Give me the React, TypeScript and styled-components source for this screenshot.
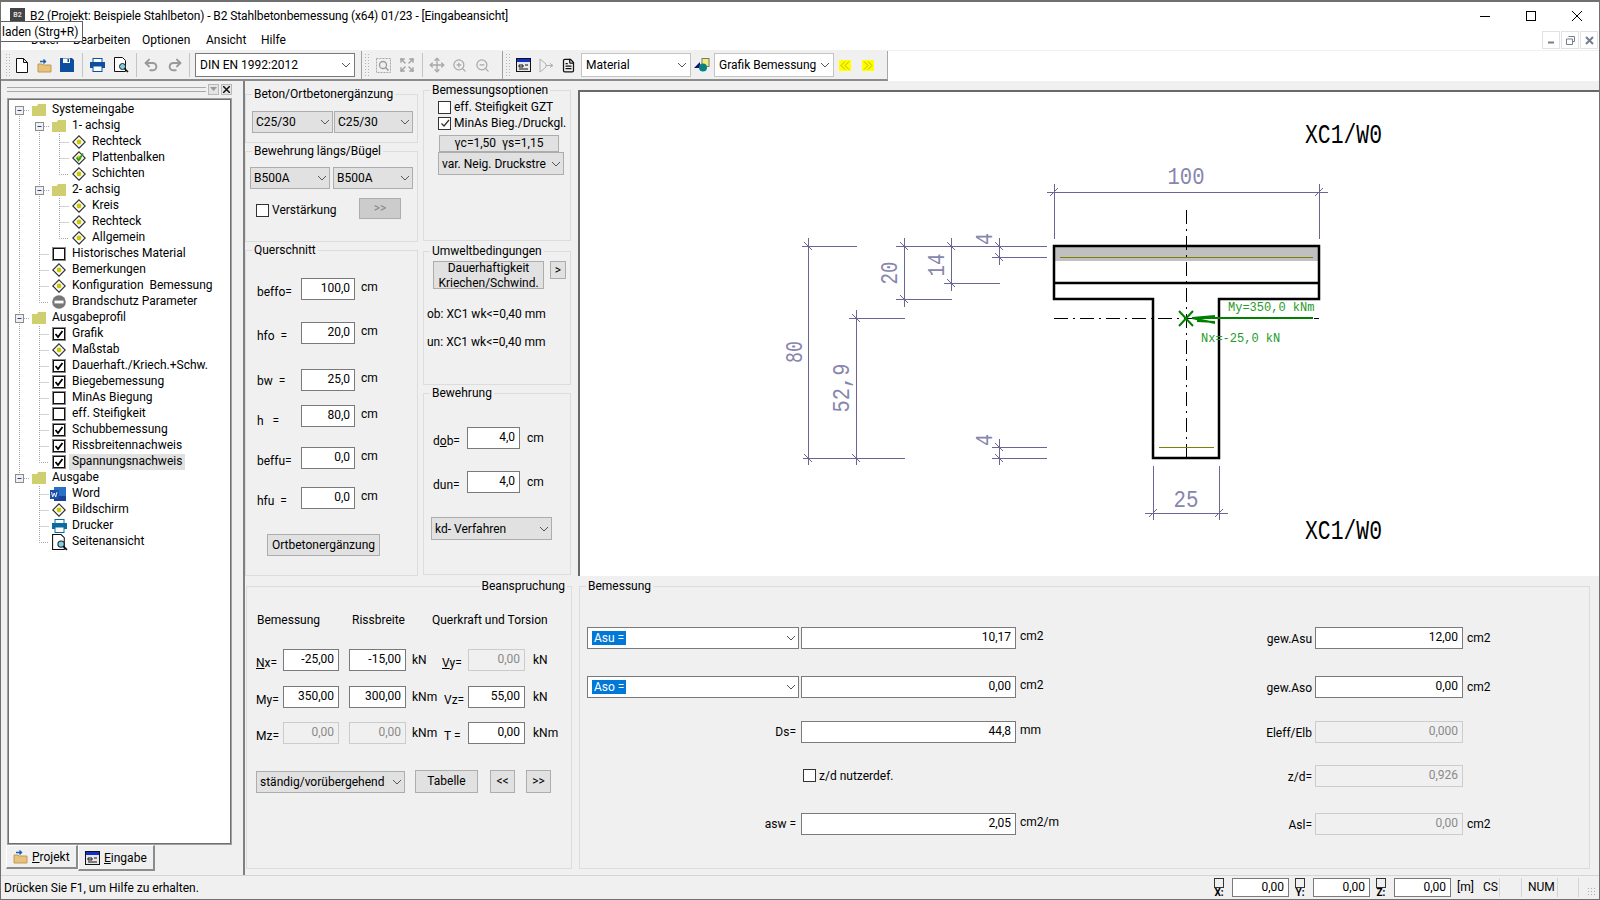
import { ReactNode } from "react";
import styled, { createGlobalStyle } from "styled-components";
import { Expand, FileText, Move, Redo2, Undo2, ZoomIn, ZoomOut } from "lucide-react";

const GlobalStyle = createGlobalStyle`
  html, body, #root {
    margin: 0;
    padding: 0;
    width: 1600px;
    height: 900px;
    overflow: hidden;
  }
  * {
    box-sizing: border-box;
  }
  body {
    font-family: Roboto, "Noto Sans", "Liberation Sans", sans-serif;
    font-size: 12px;
    color: #000;
    background: #f0f0f0;
  }
`;

const Frame = styled.div`
  position: relative;
  width: 1600px;
  height: 900px;
  display: flex;
  flex-direction: column;
  background: #f0f0f0;
  overflow: hidden;
  &::after {
    content: "";
    position: absolute;
    inset: 0;
    border: 1px solid #707070;
    border-top-width: 2px;
    pointer-events: none;
  }
`;

const TitleBar = styled.div`
  height: 30px;
  background: #fff;
  display: flex;
  align-items: center;
  padding: 1px 0 0 10px;
`;

const AppIcon = styled.span`
  width: 15px;
  height: 15px;
  background: #444;
  color: #ddd;
  font-size: 7px;
  font-weight: 700;
  line-height: 15px;
  text-align: center;
`;

const TitleText = styled.span`
  margin-left: 5px;
  flex: 1;
  letter-spacing: -0.1px;
`;

const CaptionButton = styled.span`
  width: 46px;
  display: flex;
  justify-content: center;
  align-items: center;
`;

const MenuBar = styled.div`
  height: 21px;
  background: #fff;
  border-bottom: 1px solid #f0f0f0;
  display: flex;
  align-items: center;
  padding-left: 31px;
  position: relative;
`;

const MenuItem = styled.span<{ $w: number }>`
  width: ${(p) => p.$w}px;
`;

const MdiButtons = styled.div`
  margin-left: auto;
  margin-right: 2px;
  display: flex;
  gap: 1px;
`;

const MdiButton = styled.span`
  width: 18px;
  height: 18px;
  border: 1px solid #e2e2e2;
  display: flex;
  align-items: center;
  justify-content: center;
`;

const Tooltip = styled.div`
  position: absolute;
  left: -1px;
  top: -9px;
  height: 21px;
  width: 84px;
  background: #fff;
  border: 1px solid #606060;
  padding: 1px 0 0 2px;
  line-height: 19px;
  font-size: 12px;
`;

const ToolRow = styled.div`
  height: 30px;
  background: #fff;
  display: flex;
`;

const Toolbar = styled.div`
  width: 888px;
  height: 100%;
  background: #f0f0f0;
  border-right: 1px solid #a8a8a8;
  border-bottom: 2px solid #8c8c8c;
  display: flex;
  align-items: center;
  padding-left: 5px;
`;

const Gripper = styled.span<{ $ml?: number }>`
  width: 6px;
  height: 24px;
  margin-left: ${(p) => p.$ml ?? 0}px;
  background-image: radial-gradient(#b4b4b4 0.8px, transparent 1px);
  background-size: 3px 3px;
`;

const Tool = styled.span<{ $w: number; $ml?: number }>`
  width: ${(p) => p.$w}px;
  margin-left: ${(p) => p.$ml ?? 0}px;
  height: 22px;
  display: flex;
  align-items: center;
  justify-content: center;
  flex: none;
`;

const ToolSep = styled.span<{ $ml?: number; $mr?: number }>`
  width: 1px;
  height: 24px;
  background: #c4c4c4;
  margin: 0 ${(p) => p.$mr ?? 3}px 0 ${(p) => p.$ml ?? 3}px;
  flex: none;
`;

const ToolBreak = styled.span<{ $ml: number }>`
  width: 1px;
  height: 28px;
  background: #a0a0a0;
  margin: 0 2px 0 ${(p) => p.$ml}px;
  flex: none;
`;

const Combo = styled.div<{ $w: number; $ml?: number; $dark?: boolean }>`
  width: ${(p) => p.$w}px;
  margin-left: ${(p) => p.$ml ?? 0}px;
  height: 24px;
  flex: none;
  background: #fff;
  border: 1px solid ${(p) => (p.$dark ? "#7a7a7a" : "#c4c4c4")};
  display: flex;
  align-items: center;
  justify-content: space-between;
  padding: 0 3px 0 4px;
  white-space: nowrap;
`;

const YellowButton = styled.span<{ $ml: number }>`
  width: 12px;
  height: 11px;
  background: #ffff00;
  margin-left: ${(p) => p.$ml}px;
  display: flex;
  align-items: center;
  justify-content: center;
  flex: none;
`;

const Main = styled.div`
  flex: 1;
  display: flex;
  min-height: 0;
`;

const SidePane = styled.div`
  width: 243px;
  flex: none;
  display: flex;
  flex-direction: column;
  padding: 3px 0 4px 7px;
`;

const DockHeader = styled.div`
  height: 14px;
  width: 225px;
  display: flex;
  align-items: flex-start;
  gap: 2px;
`;

const DockGrip = styled.span`
  flex: 1;
  height: 5px;
  margin-top: 3px;
  border-top: 1px solid #a8a8a8;
  border-bottom: 1px solid #a8a8a8;
`;

const DockButton = styled.span`
  width: 11px;
  height: 11px;
  background: #e4e4e4;
  border: 1px solid #b8b8b8;
  display: flex;
  align-items: center;
  justify-content: center;
`;

const TreeFrame = styled.div`
  width: 225px;
  height: 747px;
  background: #fff;
  border: 1px solid #a0a0a0;
  box-shadow: inset 0 0 0 1px #707070;
  padding: 3px 0 0 1px;
  flex: none;
`;

const TreeRow = styled.div`
  height: 16px;
  display: flex;
  align-items: center;
`;

const NodeIcon = styled.span`
  width: 14px;
  height: 14px;
  margin-left: 3px;
  flex: none;
  display: flex;
`;

const NodeLabel = styled.span<{ $selected?: boolean }>`
  margin-left: 3px;
  padding: 0 3px;
  height: 16px;
  line-height: 15px;
  white-space: pre;
  background: ${(p) => (p.$selected ? "#e0e0e0" : "transparent")};
`;

const TabRow = styled.div`
  display: flex;
  margin-left: -1px;
`;

const PaneTab = styled.div<{ $w: number; $h: number }>`
  width: ${(p) => p.$w}px;
  height: ${(p) => p.$h}px;
  display: flex;
  align-items: center;
  gap: 4px;
  padding-left: 6px;
  border-right: 2px solid #8c8c8c;
  border-bottom: 2px solid #8c8c8c;
  border-top: 1px solid #fff;
  border-left: 1px solid #fff;
`;

const Workspace = styled.div`
  flex: 1;
  border-left: 2px solid #808080;
  display: flex;
  flex-direction: column;
  min-width: 0;
`;

const TopRow = styled.div`
  height: 495px;
  display: flex;
  flex: none;
`;

const FormColumn = styled.div<{ $w: number; $ml?: number }>`
  width: ${(p) => p.$w}px;
  margin-left: ${(p) => p.$ml ?? 0}px;
  padding-top: 1px;
  flex: none;
  display: flex;
  flex-direction: column;
`;

const Group = styled.fieldset<{ $w?: number; $h: number; $ml?: number; $mt?: number }>`
  margin: ${(p) => p.$mt ?? 0}px 0 0 ${(p) => p.$ml ?? 0}px;
  padding: 0;
  width: ${(p) => (p.$w ? `${p.$w}px` : "100%")};
  height: ${(p) => p.$h}px;
  flex: none;
  border: 1px solid #dcdcdc;
  min-width: 0;
`;

const Legend = styled.legend<{ $right?: boolean }>`
  padding: 0 2px;
  margin-left: ${(p) => (p.$right ? "auto" : "6px")};
  margin-right: ${(p) => (p.$right ? "4px" : "0")};
  line-height: 16px;
  height: 16px;
  font-size: 12px;
`;

const GroupBody = styled.div<{ $pt: number; $pl: number }>`
  padding: ${(p) => p.$pt}px 0 0 ${(p) => p.$pl}px;
  display: flex;
  flex-direction: column;
  align-items: flex-start;
`;

const PickRow = styled.div<{ $gap: number; $mt?: number }>`
  display: flex;
  gap: ${(p) => p.$gap}px;
  margin-top: ${(p) => p.$mt ?? 0}px;
`;

const Select = styled.div<{ $w: number; $h?: number; $mt?: number; $ml?: number; $white?: boolean }>`
  width: ${(p) => p.$w}px;
  height: ${(p) => p.$h ?? 22}px;
  margin-top: ${(p) => p.$mt ?? 0}px;
  margin-left: ${(p) => p.$ml ?? 0}px;
  background: ${(p) => (p.$white ? "#fff" : "#e1e1e1")};
  border: 1px solid ${(p) => (p.$white ? "#7a7a7a" : "#adadad")};
  display: flex;
  align-items: center;
  justify-content: space-between;
  padding: 0 2px 0 3px;
  white-space: nowrap;
  overflow: hidden;
  flex: none;
`;

const Selected = styled.span`
  background: #0078d7;
  color: #fff;
  padding: 0 2px;
  margin-left: 1px;
`;

const Button = styled.div<{ $w: number; $h: number; $mt?: number; $ml?: number; $pt?: number; $muted?: boolean }>`
  width: ${(p) => p.$w}px;
  height: ${(p) => p.$h}px;
  margin-top: ${(p) => p.$mt ?? 0}px;
  margin-left: ${(p) => p.$ml ?? 0}px;
  padding-top: ${(p) => p.$pt ?? 0}px;
  background: ${(p) => (p.$muted ? "#cccccc" : "#e1e1e1")};
  color: ${(p) => (p.$muted ? "#858585" : "#000")};
  border: 1px solid #adadad;
  display: flex;
  align-items: center;
  justify-content: center;
  text-align: center;
  line-height: 15px;
  flex: none;
  white-space: pre;
`;

const Check = styled.span<{ $size?: number }>`
  width: ${(p) => p.$size ?? 13}px;
  height: ${(p) => p.$size ?? 13}px;
  background: #fff;
  border: 1px solid #333;
  display: flex;
  align-items: center;
  justify-content: center;
  flex: none;
`;

const CheckLine = styled.div<{ $mt?: number; $ml?: number }>`
  display: flex;
  align-items: center;
  gap: 3px;
  height: 16px;
  margin-top: ${(p) => p.$mt ?? 0}px;
  margin-left: ${(p) => p.$ml ?? 0}px;
  white-space: nowrap;
`;

const ActionRow = styled.div`
  display: flex;
  align-items: center;
  margin-top: 9px;
  width: 163px;
  justify-content: space-between;
  padding-left: 6px;
  padding-right: 12px;
`;

const FieldRow = styled.div<{ $mt?: number; $ml?: number }>`
  display: flex;
  align-items: center;
  height: 22px;
  margin-top: ${(p) => p.$mt ?? 0}px;
  margin-left: ${(p) => p.$ml ?? 0}px;
  white-space: pre;
`;

const FieldLabel = styled.span<{ $w: number; $pl?: number; $drop?: number }>`
  width: ${(p) => p.$w}px;
  padding-left: ${(p) => p.$pl ?? 0}px;
  padding-top: ${(p) => p.$drop ?? 5}px;
  flex: none;
`;

const Unit = styled.span<{ $ml: number; $w?: number; $up?: boolean }>`
  margin-left: ${(p) => p.$ml}px;
  width: ${(p) => (p.$w ? `${p.$w}px` : "auto")};
  padding-bottom: ${(p) => (p.$up ? 4 : 0)}px;
  flex: none;
`;

const NumberInput = styled.input<{ $w: number; $ml?: number; $h?: number }>`
  width: ${(p) => p.$w}px;
  height: ${(p) => p.$h ?? 22}px;
  margin: 0 0 0 ${(p) => p.$ml ?? 0}px;
  padding: 0 4px 2px 2px;
  border: 1px solid #7a7a7a;
  background: #fff;
  color: #000;
  font: inherit;
  text-align: right;
  outline: none;
  flex: none;
  &:disabled {
    background: #f0f0f0;
    border-color: #cccccc;
    color: #8a8a8a;
  }
`;

const InfoLine = styled.div<{ $mt: number; $ml: number }>`
  margin-top: ${(p) => p.$mt}px;
  margin-left: ${(p) => p.$ml}px;
  height: 16px;
  line-height: 16px;
  white-space: nowrap;
`;

const DrawingPanel = styled.div`
  margin: 9px 0 0 7px;
  flex: 1;
  background: #fff;
  border-left: 2px solid #696969;
  border-top: 2px solid #696969;
  overflow: hidden;
`;

const BottomRow = styled.div`
  flex: 1;
  display: flex;
  min-height: 0;
  padding: 2px 0 5px 1px;
`;

const HeadRow = styled.div`
  display: flex;
  height: 16px;
  line-height: 16px;
  white-space: nowrap;
  margin-left: 1px;
`;

const HeadCell = styled.span<{ $w: number }>`
  width: ${(p) => p.$w}px;
`;

const BemessRow = styled.div<{ $mt: number }>`
  display: grid;
  grid-template-columns: 212px 215px 60px 233px 148px auto;
  column-gap: 2px;
  align-items: center;
  margin-top: ${(p) => p.$mt}px;
  height: 23px;
  white-space: nowrap;
`;

const EndLabel = styled.span`
  text-align: right;
  padding-right: 3px;
`;

const SideLabel = styled.span`
  text-align: right;
  padding-right: 1px;
  padding-top: 2px;
`;

const StatusBar = styled.div`
  height: 25px;
  flex: none;
  border-top: 1px solid #d4d4d4;
  display: flex;
  align-items: center;
  padding: 0 0 1px 4px;
`;

const StatusText = styled.span`
  flex: none;
  width: 1210px;
`;

const AxisIcon = styled.span<{ $ml?: number }>`
  width: 10px;
  height: 20px;
  margin-left: ${(p) => p.$ml ?? 0}px;
  display: flex;
  flex-direction: column;
  align-items: center;
  font-size: 10px;
  font-weight: 700;
  line-height: 9px;
  flex: none;
`;

const AxisBox = styled.span`
  width: 10px;
  height: 10px;
  border: 1px solid #333;
  flex: none;
`;

const StatusCell = styled.span<{ $w: number; $divider?: boolean }>`
  width: ${(p) => p.$w}px;
  height: 19px;
  line-height: 19px;
  padding-left: 6px;
  flex: none;
  border-right: ${(p) => (p.$divider ? "1px solid #d4d4d4" : "none")};
  white-space: nowrap;
`;

const ResizeGrip = styled.span`
  width: 10px;
  height: 10px;
  margin: 8px 0 0 8px;
  background-image: radial-gradient(#b0b0b0 0.9px, transparent 1px);
  background-size: 3px 3px;
  flex: none;
`;

// small helper drawings

function Chevron() {
  return (
    <svg width="10" height="6" viewBox="0 0 10 6" style={{ flex: "none" }}>
      <path d="M1 1l4 4 4-4" fill="none" stroke="#555" strokeWidth="1" />
    </svg>
  );
}

function TickMark() {
  return (
    <svg width="10" height="10" viewBox="0 0 10 10">
      <path d="M1.5 5.5l2.5 2.5 5-6" fill="none" stroke="#333" strokeWidth="1.3" />
    </svg>
  );
}

function DoubleArrow({ back }: { back?: boolean }) {
  return (
    <svg width="10" height="9" viewBox="0 0 10 9">
      <path
        d={back ? "M5 .5l-4 4 4 4M9 .5l-4 4 4 4" : "M1 .5l4 4-4 4M5 .5l4 4-4 4"}
        fill="none"
        stroke="#b4b400"
      />
    </svg>
  );
}

type GuideKind = "v" | "t" | "l" | "blank" | "boxFirst" | "boxMid" | "boxLast";

function Guide({ kind }: { kind: GuideKind }) {
  const dots = { stroke: "#a4a4a4", strokeDasharray: "1 1", fill: "none" };
  const isBox = kind.startsWith("box");
  return (
    <svg width="20" height="16" viewBox="0 0 20 16" style={{ flex: "none" }}>
      {kind === "v" && <path d="M10.5 0v16" {...dots} />}
      {kind === "t" && <path d="M10.5 0v16M10.5 8.5h12" {...dots} />}
      {kind === "l" && <path d="M10.5 0v8.5h12" {...dots} />}
      {kind === "boxFirst" && <path d="M10.5 8v8M15 8.5h5" {...dots} />}
      {kind === "boxMid" && <path d="M10.5 0v16M15 8.5h5" {...dots} />}
      {kind === "boxLast" && <path d="M10.5 0v4M15 8.5h5" {...dots} />}
      {isBox && (
        <>
          <rect x="6.5" y="4.5" width="8" height="8" fill="#eef0f4" stroke="#8c8c8c" />
          <path d="M8.5 8.5h4" stroke="#304080" />
        </>
      )}
    </svg>
  );
}

function FolderIcon() {
  return (
    <svg width="14" height="14" viewBox="0 0 14 14">
      <path d="M0 3h5l1-2h8v12H0z" fill="#cfcf70" />
    </svg>
  );
}

function DiamondIcon({ done }: { done?: boolean }) {
  return (
    <svg width="14" height="14" viewBox="0 0 14 14">
      <path d="M7 .8L13.2 7 7 13.2.8 7z" fill="#fff" stroke="#333" strokeWidth="1.2" />
      <circle cx="7" cy="7" r="2.4" fill="#c8c800" />
      {done && <path d="M4.5 6.5l2 3L11 2.5" fill="none" stroke="#2a9a2a" strokeWidth="1.6" />}
    </svg>
  );
}

function BoxIcon({ checked }: { checked?: boolean }) {
  return (
    <svg width="14" height="14" viewBox="0 0 14 14">
      <rect x="0.5" y="0.5" width="13" height="13" fill="#fff" stroke="#888" />
      <rect x="1.5" y="1.5" width="11" height="11" fill="none" stroke="#111" />
      {checked && <path d="M3.5 7l2.5 3 4.5-6" fill="none" stroke="#000" strokeWidth="1.8" />}
    </svg>
  );
}

function NoEntryIcon() {
  return (
    <svg width="14" height="14" viewBox="0 0 14 14">
      <circle cx="7" cy="7" r="6.8" fill="#777" />
      <rect x="2.5" y="5.6" width="9" height="2.8" fill="#fff" />
    </svg>
  );
}

function WordIcon() {
  return (
    <svg width="16" height="14" viewBox="0 0 16 14" style={{ marginLeft: -2, flex: "none" }}>
      <rect x="4" y="0" width="12" height="14" fill="#2b6fc4" />
      <rect x="4" y="9" width="12" height="5" fill="#17429a" />
      <rect x="0" y="3" width="9" height="9" fill="#1d4fa8" />
      <path d="M1.5 5l1.2 5 1.5-4 1.5 4L7 5" fill="none" stroke="#fff" strokeWidth="0.9" />
    </svg>
  );
}

function PrinterIcon({ color = "#0b6aa2" }: { color?: string }) {
  return (
    <svg width="15" height="14" viewBox="0 0 15 14" style={{ flex: "none" }}>
      <rect x="3" y="0.5" width="9" height="4" fill="#fff" stroke={color} />
      <rect x="0" y="4" width="15" height="6" fill={color} />
      <rect x="3" y="8" width="9" height="5.5" fill="#fff" stroke={color} />
    </svg>
  );
}

function PreviewIcon({ size = 16, shift = 0 }: { size?: number; shift?: number }) {
  return (
    <svg width={size} height={size} viewBox="0 0 16 16" style={{ flex: "none", margin: `${-shift}px 0 0 ${-shift}px` }}>
      <path d="M1.5.5h8l3 3v11h-11z" fill="#fff" stroke="#111" />
      <circle cx="9.5" cy="9.5" r="3" fill="#7fd0e0" stroke="#222" />
      <path d="M11.5 11.5l3.5 3.5" stroke="#111" strokeWidth="1.6" />
    </svg>
  );
}

function NewDocIcon() {
  return (
    <svg width="12" height="15" viewBox="0 0 12 15">
      <path d="M.5.5h7l4 4v10H.5zM7.5.5v4h4" fill="#fff" stroke="#111" />
    </svg>
  );
}

function OpenIcon() {
  return (
    <svg width="15" height="15" viewBox="0 0 15 15" style={{ flex: "none" }}>
      <path d="M1 6h4l1 1h8v7H1z" fill="#e8c27c" stroke="#c09a54" />
      <path d="M3 3.5h5.5M6.5 1.5l2 2-2 2" fill="none" stroke="#1a5fb0" strokeWidth="1.4" />
    </svg>
  );
}

function SaveIcon() {
  return (
    <svg width="14" height="14" viewBox="0 0 14 14">
      <path d="M0 0h12l2 2v12H0z" fill="#0d4f9e" />
      <rect x="3" y="0.5" width="7" height="4.5" fill="#fff" />
      <rect x="7.5" y="1" width="1.5" height="3" fill="#0d4f9e" />
    </svg>
  );
}

function FormViewIcon() {
  return (
    <svg width="15" height="14" viewBox="0 0 15 14" style={{ flex: "none" }}>
      <rect x="0.5" y="0.5" width="14" height="13" fill="#e8e8e8" stroke="#111" />
      <rect x="1" y="1" width="13" height="3" fill="#1030c8" />
      <path d="M3 7h4v2H3zM9 7h3M3 11h9" fill="none" stroke="#111" />
    </svg>
  );
}

function ZoomBoxIcon() {
  return (
    <svg width="15" height="15" viewBox="0 0 15 15">
      <rect x="0.5" y="0.5" width="14" height="14" fill="none" stroke="#a8a8a8" strokeDasharray="2 1" />
      <circle cx="7" cy="7" r="3.5" fill="none" stroke="#9a9a9a" strokeWidth="1.3" />
      <path d="M9.5 9.5l3 3" stroke="#9a9a9a" strokeWidth="1.5" />
    </svg>
  );
}

function BeamIcon() {
  return (
    <svg width="15" height="15" viewBox="0 0 15 15">
      <path d="M1 1l6 5v3l-6 5zM7 7.5h7M11 5.5l3 2-3 2" fill="none" stroke="#b0b0b0" />
    </svg>
  );
}

function ShapesIcon() {
  return (
    <svg width="16" height="14" viewBox="0 0 16 14">
      <rect x="8" y="0.5" width="7" height="8" fill="#f5ee70" stroke="#777" />
      <path d="M0 10l6-6v6z" fill="#101070" />
      <circle cx="9" cy="9.5" r="4" fill="#0a8080" />
    </svg>
  );
}

// tree content

type TreeNode = { guides: GuideKind[]; icon: ReactNode; label: string; selected?: boolean };

const folder = <FolderIcon />;
const diamond = <DiamondIcon />;
const on = <BoxIcon checked />;
const off = <BoxIcon />;

const treeNodes: TreeNode[] = [
  { guides: ["boxFirst"], icon: folder, label: "Systemeingabe" },
  { guides: ["v", "boxFirst"], icon: folder, label: "1- achsig" },
  { guides: ["v", "v", "t"], icon: diamond, label: "Rechteck" },
  { guides: ["v", "v", "t"], icon: <DiamondIcon done />, label: "Plattenbalken" },
  { guides: ["v", "v", "l"], icon: diamond, label: "Schichten" },
  { guides: ["v", "boxMid"], icon: folder, label: "2- achsig" },
  { guides: ["v", "v", "t"], icon: diamond, label: "Kreis" },
  { guides: ["v", "v", "t"], icon: diamond, label: "Rechteck" },
  { guides: ["v", "v", "l"], icon: diamond, label: "Allgemein" },
  { guides: ["v", "t"], icon: off, label: "Historisches Material" },
  { guides: ["v", "t"], icon: diamond, label: "Bemerkungen" },
  { guides: ["v", "t"], icon: diamond, label: "Konfiguration  Bemessung" },
  { guides: ["v", "l"], icon: <NoEntryIcon />, label: "Brandschutz Parameter" },
  { guides: ["boxMid"], icon: folder, label: "Ausgabeprofil" },
  { guides: ["v", "t"], icon: on, label: "Grafik" },
  { guides: ["v", "t"], icon: diamond, label: "Maßstab" },
  { guides: ["v", "t"], icon: on, label: "Dauerhaft./Kriech.+Schw." },
  { guides: ["v", "t"], icon: on, label: "Biegebemessung" },
  { guides: ["v", "t"], icon: off, label: "MinAs Biegung" },
  { guides: ["v", "t"], icon: off, label: "eff. Steifigkeit" },
  { guides: ["v", "t"], icon: on, label: "Schubbemessung" },
  { guides: ["v", "t"], icon: on, label: "Rissbreitennachweis" },
  { guides: ["v", "l"], icon: on, label: "Spannungsnachweis", selected: true },
  { guides: ["boxLast"], icon: folder, label: "Ausgabe" },
  { guides: ["blank", "t"], icon: <WordIcon />, label: "Word" },
  { guides: ["blank", "t"], icon: diamond, label: "Bildschirm" },
  { guides: ["blank", "t"], icon: <PrinterIcon />, label: "Drucker" },
  { guides: ["blank", "l"], icon: <PreviewIcon size={17} shift={1} />, label: "Seitenansicht" },
];

const crossSectionFields = [
  { label: "beffo=", value: "100,0", mt: 20, drop: 6 },
  { label: "hfo  =", value: "20,0", mt: 22, drop: 5 },
  { label: "bw  =", value: "25,0", mt: 25, drop: 2 },
  { label: "h   =", value: "80,0", mt: 14, drop: 10 },
  { label: "beffu=", value: "0,0", mt: 20, drop: 5 },
  { label: "hfu  =", value: "0,0", mt: 18, drop: 5 },
];

// section drawing, in page coordinates

const DIM = "#6a6693";
const DIM_TEXT = "#8686ae";
const LOAD_TEXT = "#259a28";

function DimLine({ x1, y1, x2, y2 }: { x1: number; y1: number; x2: number; y2: number }) {
  const ox = x1 === x2 ? 0.5 : 0;
  const oy = y1 === y2 ? 0.5 : 0;
  return <line x1={x1 + ox} y1={y1 + oy} x2={x2 + ox} y2={y2 + oy} stroke={DIM} strokeWidth="1" />;
}

function Tick({ x, y, rise }: { x: number; y: number; rise?: boolean }) {
  const d = 4;
  return rise ? (
    <line x1={x - d} y1={y + d} x2={x + d} y2={y - d} stroke={DIM} />
  ) : (
    <line x1={x - d} y1={y - d} x2={x + d} y2={y + d} stroke={DIM} />
  );
}

function DimText({ x, y, width, children, rotate }: { x: number; y: number; width: number; children: string; rotate?: boolean }) {
  return (
    <text
      x={x}
      y={y}
      fill={DIM_TEXT}
      fontFamily="'Liberation Mono', monospace"
      fontSize="24"
      textAnchor="middle"
      textLength={width}
      lengthAdjust="spacingAndGlyphs"
      transform={rotate ? `rotate(-90 ${x} ${y})` : undefined}
    >
      {children}
    </text>
  );
}

function SectionDrawing() {
  const centerDash = "14 5 2 5";
  return (
    <svg width="1020" height="484" viewBox="580 92 1020 484" style={{ display: "block" }}>
      <rect x="1054" y="246" width="265" height="15" fill="#c0c0c0" />

      <DimLine x1={1047} y1={192} x2={1328} y2={192} />
      <DimLine x1={1054} y1={184} x2={1054} y2={239} />
      <DimLine x1={1319} y1={184} x2={1319} y2={239} />
      <Tick x={1054} y={192} rise />
      <Tick x={1319} y={192} rise />
      <DimText x={1186} y={184} width={37}>100</DimText>

      <DimLine x1={808} y1={238} x2={808} y2={465} />
      <DimLine x1={802} y1={246} x2={857} y2={246} />
      <Tick x={808} y={246} />
      <Tick x={808} y={458} />
      <DimLine x1={803} y1={458} x2={905} y2={458} />
      <DimText x={802} y={352} width={22} rotate>80</DimText>

      <DimLine x1={856} y1={310} x2={856} y2={465} />
      <DimLine x1={849} y1={318} x2={905} y2={318} />
      <Tick x={856} y={318} />
      <Tick x={856} y={458} />
      <DimText x={849} y={388} width={49} rotate>52,9</DimText>

      <DimLine x1={904} y1={238} x2={904} y2={307} />
      <DimLine x1={896} y1={246} x2={1047} y2={246} />
      <DimLine x1={896} y1={299} x2={952} y2={299} />
      <Tick x={904} y={246} />
      <Tick x={904} y={299} />
      <DimText x={897} y={273} width={23} rotate>20</DimText>

      <DimLine x1={951} y1={238} x2={951} y2={291} />
      <DimLine x1={944} y1={283} x2={1000} y2={283} />
      <Tick x={951} y={246} />
      <Tick x={951} y={283} />
      <DimText x={944} y={265} width={23} rotate>14</DimText>

      <DimLine x1={999} y1={238} x2={999} y2={265} />
      <DimLine x1={992} y1={257} x2={1047} y2={257} />
      <Tick x={999} y={246} />
      <Tick x={999} y={257} />
      <DimText x={992} y={239} width={12} rotate>4</DimText>

      <DimLine x1={999} y1={439} x2={999} y2={465} />
      <DimLine x1={992} y1={447} x2={1047} y2={447} />
      <DimLine x1={992} y1={458} x2={1047} y2={458} />
      <Tick x={999} y={447} />
      <Tick x={999} y={458} />
      <DimText x={992} y={440} width={12} rotate>4</DimText>

      <DimLine x1={1153} y1={466} x2={1153} y2={520} />
      <DimLine x1={1219} y1={466} x2={1219} y2={520} />
      <DimLine x1={1145} y1={513} x2={1228} y2={513} />
      <Tick x={1153} y={513} rise />
      <Tick x={1219} y={513} rise />
      <DimText x={1186} y={507} width={25}>25</DimText>

      <path
        d="M1054 246H1319V299H1219V458H1153V299H1054ZM1054 283H1319"
        fill="none"
        stroke="#000"
        strokeWidth="2.5"
      />
      <line x1="1186.5" y1="210" x2="1186.5" y2="458" stroke="#000" strokeDasharray={centerDash} />
      <line x1="1054" y1="318.5" x2="1319" y2="318.5" stroke="#000" strokeDasharray={centerDash} />
      <line x1="1060" y1="257.5" x2="1313" y2="257.5" stroke="#808000" strokeWidth="1.2" />
      <line x1="1159" y1="447.5" x2="1214" y2="447.5" stroke="#808000" strokeWidth="1.2" />

      <path
        d="M1179 311l14 15M1193 311l-14 15M1313 318H1192M1192 318l23-2M1192 318l23 5M1197 321l18 1"
        fill="none"
        stroke="#008000"
        strokeWidth="2"
      />
      <text x="1228" y="311" fill={LOAD_TEXT} fontFamily="'Liberation Mono', monospace" fontSize="12">
        My=350,0 kNm
      </text>
      <text x="1201" y="342" fill={LOAD_TEXT} fontFamily="'Liberation Mono', monospace" fontSize="12">
        Nx=-25,0 kN
      </text>

      <text x="1305" y="143" fill="#000" fontFamily="'Liberation Mono', monospace" fontSize="28" textLength={77} lengthAdjust="spacingAndGlyphs">
        XC1/W0
      </text>
      <text x="1305" y="539" fill="#000" fontFamily="'Liberation Mono', monospace" fontSize="28" textLength={77} lengthAdjust="spacingAndGlyphs">
        XC1/W0
      </text>
    </svg>
  );
}

function App() {
  return (
    <Frame>
      <GlobalStyle />
      <TitleBar>
        <AppIcon>B2</AppIcon>
        <TitleText>B2 (Projekt: Beispiele Stahlbeton) - B2 Stahlbetonbemessung (x64) 01/23 - [Eingabeansicht]</TitleText>
        <CaptionButton>
          <svg width="10" height="10" viewBox="0 0 10 10"><path d="M0 5.5h10" stroke="#000" /></svg>
        </CaptionButton>
        <CaptionButton>
          <svg width="10" height="10" viewBox="0 0 10 10"><rect x="0.5" y="0.5" width="9" height="9" fill="none" stroke="#000" /></svg>
        </CaptionButton>
        <CaptionButton>
          <svg width="10" height="10" viewBox="0 0 10 10"><path d="M0 0l10 10M10 0L0 10" stroke="#000" /></svg>
        </CaptionButton>
      </TitleBar>

      <MenuBar>
        <Tooltip>laden (Strg+R)</Tooltip>
        <MenuItem $w={42}>Datei</MenuItem>
        <MenuItem $w={69}>Bearbeiten</MenuItem>
        <MenuItem $w={64}>Optionen</MenuItem>
        <MenuItem $w={55}>Ansicht</MenuItem>
        <MenuItem $w={30}>Hilfe</MenuItem>
        <MdiButtons>
          <MdiButton>
            <svg width="8" height="8" viewBox="0 0 8 8"><path d="M1 6.5h6" stroke="#76808c" strokeWidth="2" /></svg>
          </MdiButton>
          <MdiButton>
            <svg width="9" height="9" viewBox="0 0 9 9"><path d="M2.5.5h6v5H7M.5 3h6v5.5h-6z" fill="none" stroke="#76808c" /></svg>
          </MdiButton>
          <MdiButton>
            <svg width="9" height="9" viewBox="0 0 9 9"><path d="M1 1l7 7M8 1L1 8" stroke="#76808c" strokeWidth="2" /></svg>
          </MdiButton>
        </MdiButtons>
      </MenuBar>

      <ToolRow>
        <Toolbar>
          <Gripper />
          <Tool $w={22}><NewDocIcon /></Tool>
          <Tool $w={22}><OpenIcon /></Tool>
          <Tool $w={24}><SaveIcon /></Tool>
          <ToolSep />
          <Tool $w={22}><PrinterIcon color="#0d4f9e" /></Tool>
          <Tool $w={24} $ml={1}><PreviewIcon /></Tool>
          <ToolSep />
          <Tool $w={22}><Undo2 size={16} color="#9a9a9a" strokeWidth={3} /></Tool>
          <Tool $w={22} $ml={2}><Redo2 size={16} color="#9a9a9a" strokeWidth={3} /></Tool>
          <ToolSep $mr={5} />
          <Combo $w={160} $dark>DIN EN 1992:2012<Chevron /></Combo>
          <ToolBreak $ml={6} />
          <Gripper />
          <Tool $w={22} $ml={2}><ZoomBoxIcon /></Tool>
          <Tool $w={22} $ml={2}><Expand size={16} color="#a0a0a0" strokeWidth={2} /></Tool>
          <ToolSep $ml={4} $mr={3} />
          <Tool $w={22}><Move size={16} color="#a8a8a8" /></Tool>
          <Tool $w={23}><ZoomIn size={15} color="#a8a8a8" /></Tool>
          <Tool $w={22}><ZoomOut size={15} color="#a8a8a8" /></Tool>
          <ToolBreak $ml={9} />
          <Gripper />
          <Tool $w={23} $ml={1}><FormViewIcon /></Tool>
          <Tool $w={22}><BeamIcon /></Tool>
          <Tool $w={22}><FileText size={15} color="#111" /></Tool>
          <Combo $w={110} $ml={2}>Material<Chevron /></Combo>
          <Tool $w={21}><ShapesIcon /></Tool>
          <Combo $w={120} $ml={2}>Grafik Bemessung<Chevron /></Combo>
          <YellowButton $ml={5}><DoubleArrow back /></YellowButton>
          <YellowButton $ml={11}><DoubleArrow /></YellowButton>
        </Toolbar>
      </ToolRow>

      <Main>
        <SidePane>
          <DockHeader>
            <DockGrip />
            <DockButton>
              <svg width="7" height="5" viewBox="0 0 7 5"><path d="M0 0h7L3.5 4z" fill="#999" /></svg>
            </DockButton>
            <DockButton>
              <svg width="7" height="7" viewBox="0 0 7 7"><path d="M0 0l7 7M7 0L0 7" stroke="#111" strokeWidth="1.5" /></svg>
            </DockButton>
          </DockHeader>
          <TreeFrame>
            {treeNodes.map((node) => (
              <TreeRow key={`${node.label}-${node.guides.join()}`}>
                {node.guides.map((kind, i) => (
                  <Guide key={i} kind={kind} />
                ))}
                <NodeIcon>{node.icon}</NodeIcon>
                <NodeLabel $selected={node.selected}>{node.label}</NodeLabel>
              </TreeRow>
            ))}
          </TreeFrame>
          <TabRow>
            <PaneTab $w={72} $h={24}>
              <OpenIcon />
              <span><u>P</u>rojekt</span>
            </PaneTab>
            <PaneTab $w={77} $h={26}>
              <FormViewIcon />
              <span><u>E</u>ingabe</span>
            </PaneTab>
          </TabRow>
        </SidePane>

        <Workspace>
          <TopRow>
            <FormColumn $w={173}>
              <Group $h={57} $mt={4}>
                <Legend>Beton/Ortbetonergänzung</Legend>
                <GroupBody $pt={9} $pl={6}>
                  <PickRow $gap={1}>
                    <Select $w={81}>C25/30<Chevron /></Select>
                    <Select $w={79}>C25/30<Chevron /></Select>
                  </PickRow>
                </GroupBody>
              </Group>
              <Group $h={99}>
                <Legend>Bewehrung längs/Bügel</Legend>
                <GroupBody $pt={8} $pl={4}>
                  <PickRow $gap={3}>
                    <Select $w={80}>B500A<Chevron /></Select>
                    <Select $w={80}>B500A<Chevron /></Select>
                  </PickRow>
                  <ActionRow>
                    <CheckLine $mt={3}>
                      <Check />
                      Verstärkung
                    </CheckLine>
                    <Button $w={42} $h={21} $muted>&gt;&gt;</Button>
                  </ActionRow>
                </GroupBody>
              </Group>
              <Group $h={334}>
                <Legend>Querschnitt</Legend>
                <GroupBody $pt={0} $pl={11}>
                  {crossSectionFields.map((field) => (
                    <FieldRow key={field.label} $mt={field.mt}>
                      <FieldLabel $w={44} $drop={field.drop}>{field.label}</FieldLabel>
                      <NumberInput readOnly $w={54} defaultValue={field.value} />
                      <Unit $ml={6} $up>cm</Unit>
                    </FieldRow>
                  ))}
                  <Button $w={113} $h={22} $mt={25} $ml={10}>Ortbetonergänzung</Button>
                </GroupBody>
              </Group>
            </FormColumn>

            <FormColumn $w={148} $ml={5}>
              <Group $h={159}>
                <Legend>Bemessungsoptionen</Legend>
                <GroupBody $pt={1} $pl={14}>
                  <CheckLine><Check />eff. Steifigkeit GZT</CheckLine>
                  <CheckLine><Check><TickMark /></Check>MinAs Bieg./Druckgl.</CheckLine>
                  <Button $w={120} $h={17} $mt={4} $ml={1}>γc=1,50  γs=1,15</Button>
                  <Select $w={126} $h={23}>var. Neig. Druckstre<Chevron /></Select>
                </GroupBody>
              </Group>
              <Group $h={142} $mt={2}>
                <Legend>Umweltbedingungen</Legend>
                <GroupBody $pt={2} $pl={3}>
                  <PickRow $gap={6}>
                    <Button $w={111} $h={28} $ml={6} $pt={2}>Dauerhaftigkeit<br />Kriechen/Schwind.</Button>
                    <Button $w={16} $h={18}>&gt;</Button>
                  </PickRow>
                  <InfoLine $mt={17} $ml={0}>ob: XC1 wk&lt;=0,40 mm</InfoLine>
                  <InfoLine $mt={12} $ml={0}>un: XC1 wk&lt;=0,40 mm</InfoLine>
                </GroupBody>
              </Group>
              <Group $h={190}>
                <Legend>Bewehrung</Legend>
                <GroupBody $pt={26} $pl={9}>
                  <FieldRow>
                    <FieldLabel $w={34}>d<u>o</u>b=</FieldLabel>
                    <NumberInput readOnly $w={53} defaultValue="4,0" />
                    <Unit $ml={7}>cm</Unit>
                  </FieldRow>
                  <FieldRow $mt={22}>
                    <FieldLabel $w={34}>dun=</FieldLabel>
                    <NumberInput readOnly $w={53} defaultValue="4,0" />
                    <Unit $ml={7}>cm</Unit>
                  </FieldRow>
                  <Select $w={121} $h={23} $mt={24} $ml={-2}>kd- Verfahren<Chevron /></Select>
                </GroupBody>
              </Group>
            </FormColumn>

            <DrawingPanel>
              <SectionDrawing />
            </DrawingPanel>
          </TopRow>

          <BottomRow>
            <Group $w={326} $h={291}>
              <Legend $right>Beanspruchung</Legend>
              <GroupBody $pt={18} $pl={9}>
                <HeadRow>
                  <HeadCell $w={95}>Bemessung</HeadCell>
                  <HeadCell $w={80}>Rissbreite</HeadCell>
                  <HeadCell $w={130}>Querkraft und Torsion</HeadCell>
                </HeadRow>
                <FieldRow $mt={21}>
                  <FieldLabel $w={27}><u>N</u>x=</FieldLabel>
                  <NumberInput readOnly $w={56} defaultValue="-25,00" />
                  <NumberInput readOnly $w={57} $ml={10} defaultValue="-15,00" />
                  <Unit $ml={6} $w={26}>kN</Unit>
                  <FieldLabel $w={30} $pl={4}><u>V</u>y=</FieldLabel>
                  <NumberInput disabled $w={57} defaultValue="0,00" />
                  <Unit $ml={8}>kN</Unit>
                </FieldRow>
                <FieldRow $mt={15}>
                  <FieldLabel $w={27}>My=</FieldLabel>
                  <NumberInput readOnly $w={56} defaultValue="350,00" />
                  <NumberInput readOnly $w={57} $ml={10} defaultValue="300,00" />
                  <Unit $ml={6} $w={26}>kNm</Unit>
                  <FieldLabel $w={30} $pl={6}>Vz=</FieldLabel>
                  <NumberInput readOnly $w={57} defaultValue="55,00" />
                  <Unit $ml={8}>kN</Unit>
                </FieldRow>
                <FieldRow $mt={14}>
                  <FieldLabel $w={27}>Mz=</FieldLabel>
                  <NumberInput disabled $w={56} defaultValue="0,00" />
                  <NumberInput disabled $w={57} $ml={10} defaultValue="0,00" />
                  <Unit $ml={6} $w={26}>kNm</Unit>
                  <FieldLabel $w={30} $pl={6}>T =</FieldLabel>
                  <NumberInput readOnly $w={57} defaultValue="0,00" />
                  <Unit $ml={8}>kNm</Unit>
                </FieldRow>
                <PickRow $gap={0} $mt={26}>
                  <Select $w={149} $mt={1}>ständig/vorübergehend<Chevron /></Select>
                  <Button $w={63} $h={23} $ml={10}>Tabelle</Button>
                  <Button $w={25} $h={23} $ml={12}>&lt;&lt;</Button>
                  <Button $w={25} $h={23} $ml={11}>&gt;&gt;</Button>
                </PickRow>
              </GroupBody>
            </Group>

            <Group $w={1011} $h={291} $ml={7}>
              <Legend>Bemessung</Legend>
              <GroupBody $pt={32} $pl={7}>
                <BemessRow $mt={0}>
                  <Select $w={212} $white><Selected>Asu =</Selected><Chevron /></Select>
                  <NumberInput readOnly $w={215} defaultValue="10,17" />
                  <Unit $ml={2} $up>cm2</Unit>
                  <SideLabel>gew.Asu</SideLabel>
                  <NumberInput readOnly $w={148} defaultValue="12,00" />
                  <Unit $ml={2}>cm2</Unit>
                </BemessRow>
                <BemessRow $mt={26}>
                  <Select $w={212} $white><Selected>Aso =</Selected><Chevron /></Select>
                  <NumberInput readOnly $w={215} defaultValue="0,00" />
                  <Unit $ml={2} $up>cm2</Unit>
                  <SideLabel>gew.Aso</SideLabel>
                  <NumberInput readOnly $w={148} defaultValue="0,00" />
                  <Unit $ml={2}>cm2</Unit>
                </BemessRow>
                <BemessRow $mt={22}>
                  <EndLabel>Ds=</EndLabel>
                  <NumberInput readOnly $w={215} defaultValue="44,8" />
                  <Unit $ml={2} $up>mm</Unit>
                  <SideLabel>Eleff/Elb</SideLabel>
                  <NumberInput disabled $w={148} defaultValue="0,000" />
                  <span />
                </BemessRow>
                <BemessRow $mt={21}>
                  <span />
                  <CheckLine $ml={2}><Check />z/d nutzerdef.</CheckLine>
                  <span />
                  <SideLabel>z/d=</SideLabel>
                  <NumberInput disabled $w={148} defaultValue="0,926" />
                  <span />
                </BemessRow>
                <BemessRow $mt={25}>
                  <EndLabel>asw =</EndLabel>
                  <NumberInput readOnly $w={215} defaultValue="2,05" />
                  <Unit $ml={2} $up>cm2/m</Unit>
                  <SideLabel>Asl=</SideLabel>
                  <NumberInput disabled $w={148} defaultValue="0,00" />
                  <Unit $ml={2}>cm2</Unit>
                </BemessRow>
              </GroupBody>
            </Group>
          </BottomRow>
        </Workspace>
      </Main>

      <StatusBar>
        <StatusText>Drücken Sie F1, um Hilfe zu erhalten.</StatusText>
        <AxisIcon><AxisBox />X:</AxisIcon>
        <NumberInput readOnly $w={57} $h={19} $ml={8} defaultValue="0,00" />
        <AxisIcon $ml={6}><AxisBox />Y:</AxisIcon>
        <NumberInput readOnly $w={57} $h={19} $ml={8} defaultValue="0,00" />
        <AxisIcon $ml={6}><AxisBox />Z:</AxisIcon>
        <NumberInput readOnly $w={57} $h={19} $ml={8} defaultValue="0,00" />
        <StatusCell $w={26}>[m]</StatusCell>
        <StatusCell $w={23} $divider>CS</StatusCell>
        <StatusCell $w={22} $divider />
        <StatusCell $w={36} $divider>NUM</StatusCell>
        <StatusCell $w={21} $divider />
        <ResizeGrip />
      </StatusBar>
    </Frame>
  );
}

export default App;
